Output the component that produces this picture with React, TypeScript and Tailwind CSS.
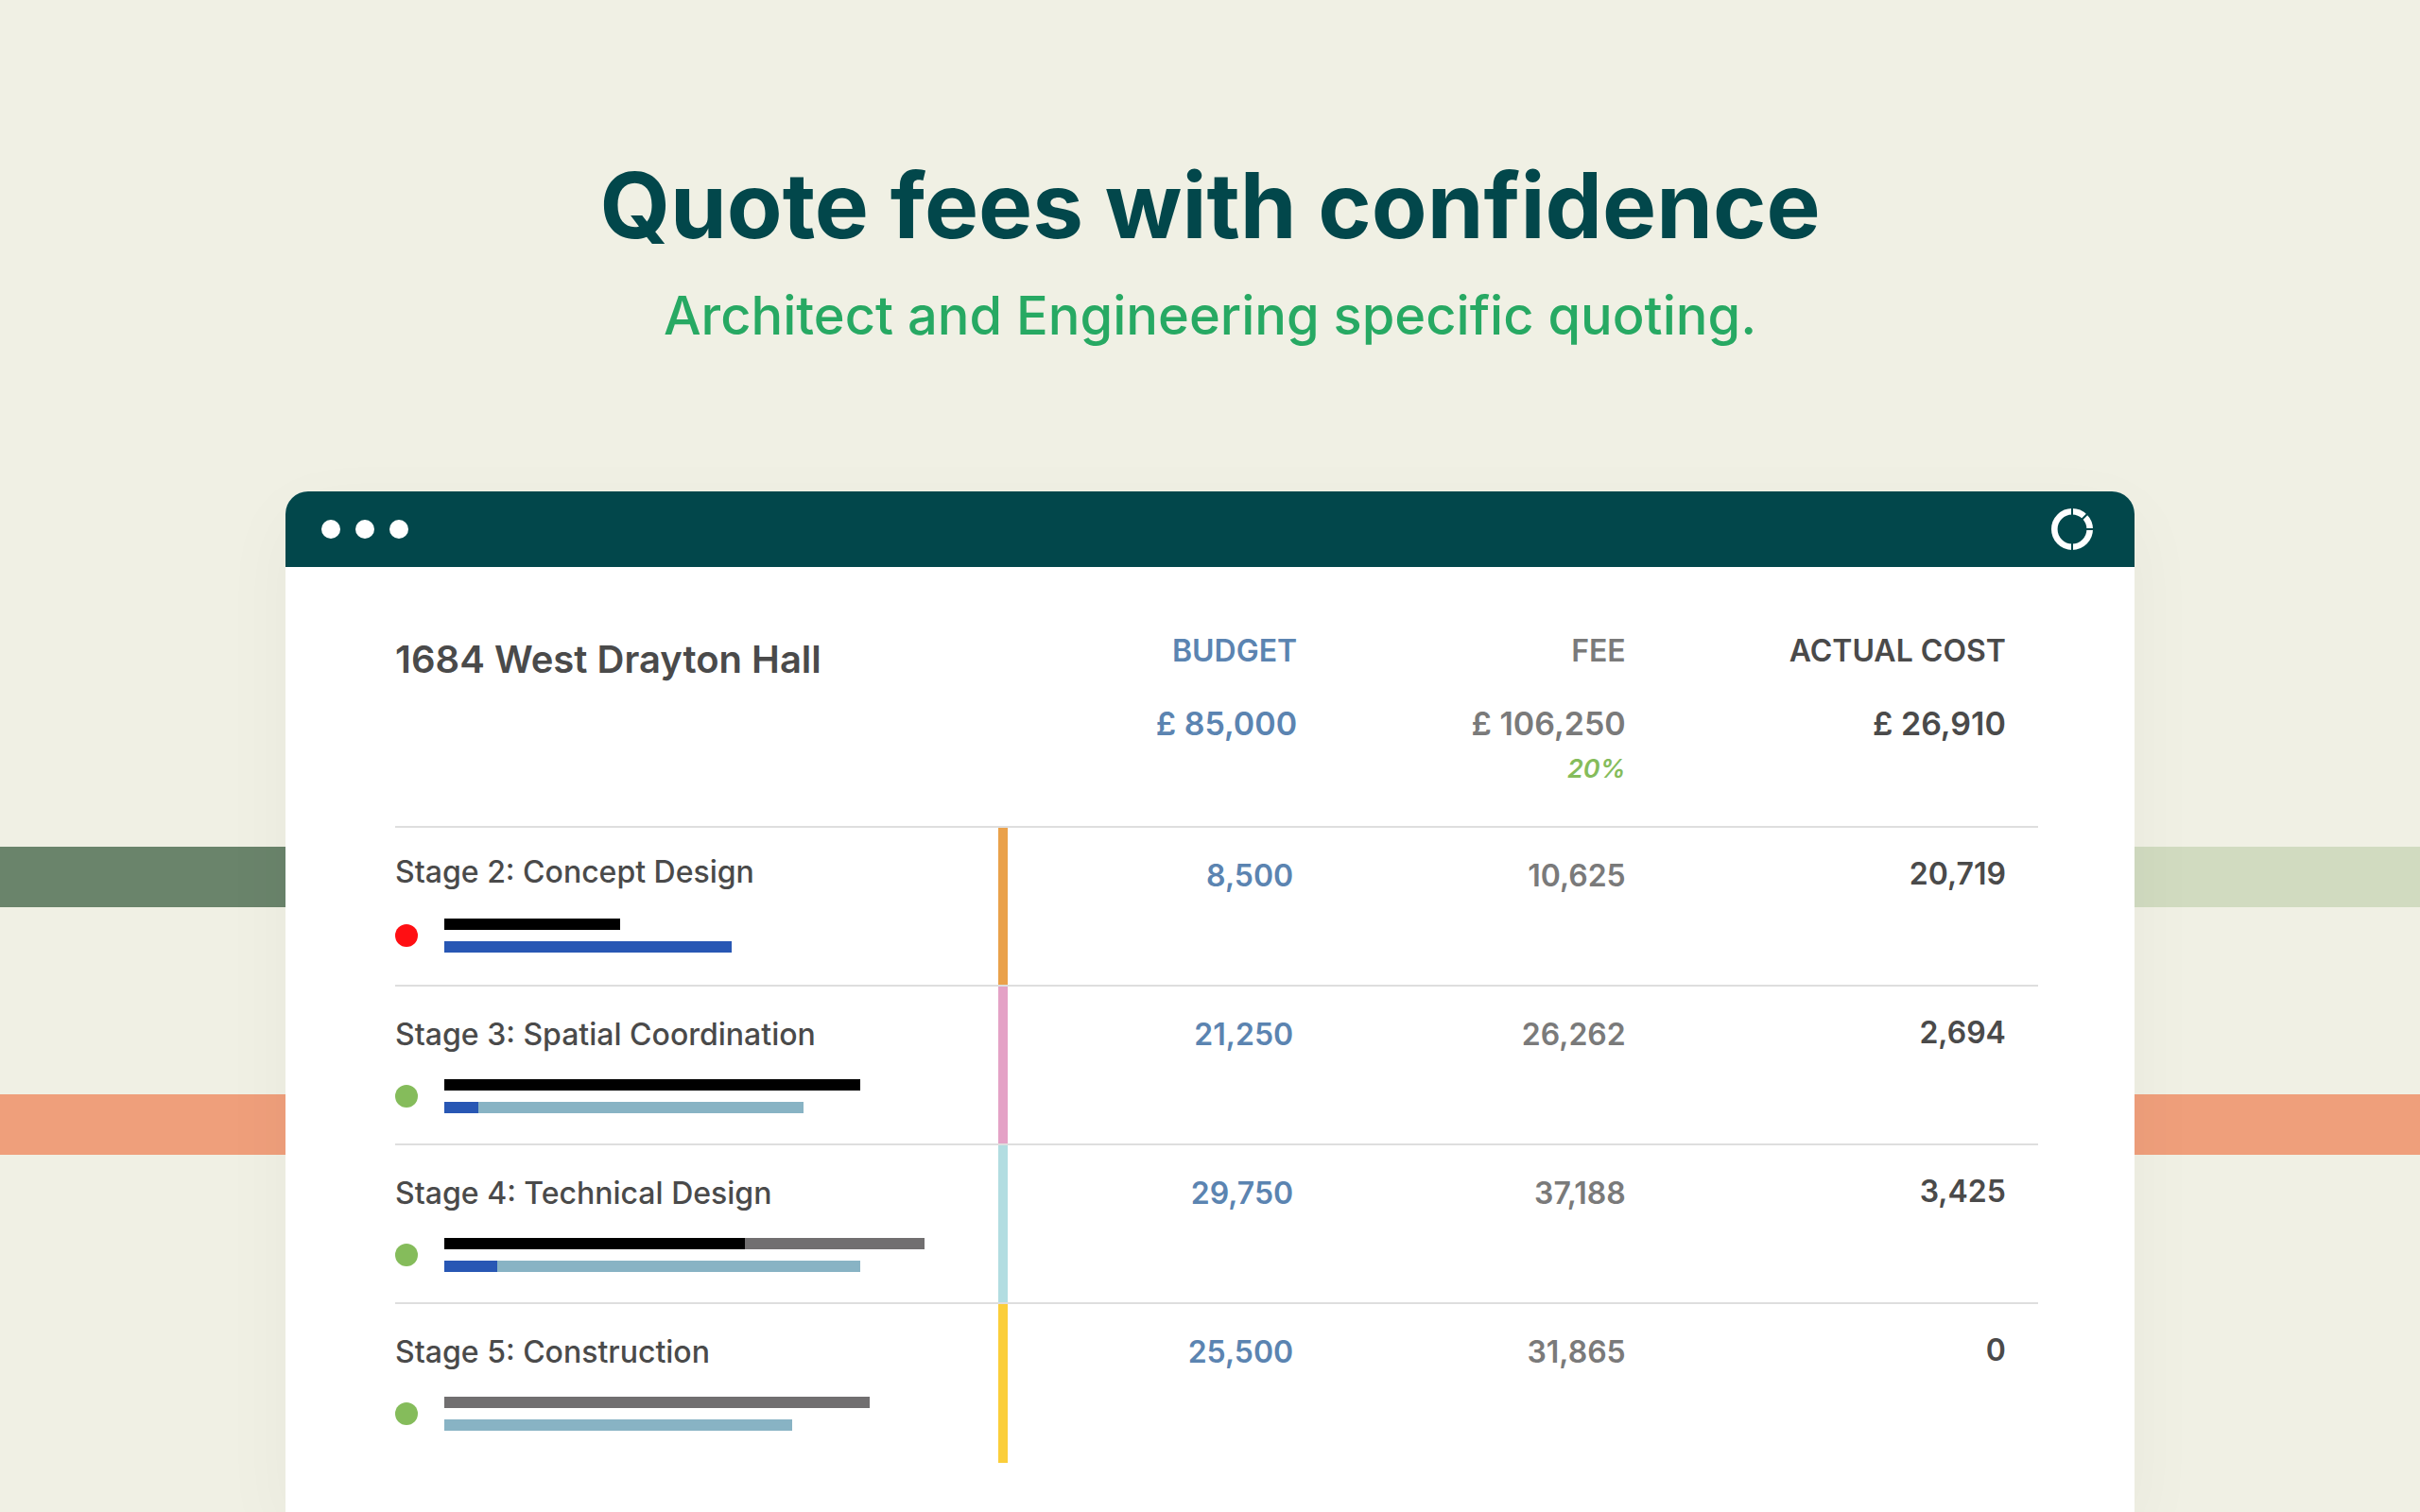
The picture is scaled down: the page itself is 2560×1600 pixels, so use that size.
interface Segment { width: number; color: string; }

interface Stage {
  name: string;
  status: string;
  accent: string;
  fee: Segment[];
  cost: Segment[];
  amounts: [string, string, string];
}

const stages: Stage[] = [
  {
    name: 'Stage 2: Concept Design',
    status: 'bg-[#ff0f13]',
    accent: 'bg-[#eaa14b]',
    fee: [{ width: 186, color: 'bg-black' }],
    cost: [{ width: 304, color: 'bg-[#2857b4]' }],
    amounts: ['8,500', '10,625', '20,719'],
  },
  {
    name: 'Stage 3: Spatial Coordination',
    status: 'bg-[#85bc5b]',
    accent: 'bg-[#e4a2c6]',
    fee: [{ width: 440, color: 'bg-black' }],
    cost: [{ width: 36, color: 'bg-[#2857b4]' }, { width: 344, color: 'bg-[#88b3c4]' }],
    amounts: ['21,250', '26,262', '2,694'],
  },
  {
    name: 'Stage 4: Technical Design',
    status: 'bg-[#85bc5b]',
    accent: 'bg-[#b2dde1]',
    fee: [{ width: 318, color: 'bg-black' }, { width: 190, color: 'bg-[#716f70]' }],
    cost: [{ width: 56, color: 'bg-[#2857b4]' }, { width: 384, color: 'bg-[#88b3c4]' }],
    amounts: ['29,750', '37,188', '3,425'],
  },
  {
    name: 'Stage 5: Construction',
    status: 'bg-[#85bc5b]',
    accent: 'bg-[#fbce3a]',
    fee: [{ width: 450, color: 'bg-[#716f70]' }],
    cost: [{ width: 368, color: 'bg-[#88b3c4]' }],
    amounts: ['25,500', '31,865', '0'],
  },
];

function Bar({ segments }: { segments: Segment[] }) {
  return (
    <div className="flex h-3">
      {segments.map((s) => (
        <div key={s.color} className={s.color} style={{ width: s.width }} />
      ))}
    </div>
  );
}

function Logo() {
  return (
    <svg viewBox="0 0 44 44" className="size-11" aria-hidden="true">
      <circle cx="22" cy="22" r="18.7" fill="none" stroke="#fff" strokeWidth="6.6" />
      <path d="M22 0V8M22 36V44M35 22H44M32 12L39 5" stroke="#02474b" strokeWidth="2" />
    </svg>
  );
}

function Stripes() {
  return (
    <div className="absolute inset-x-0 top-[896px]" aria-hidden="true">
      <div className="flex h-16">
        <div className="flex-1 bg-[#6a846b]" />
        <div className="flex-1 bg-[#d1dbc0]" />
      </div>
      <div className="mt-[198px] h-16 bg-[#ef9f7b]" />
    </div>
  );
}

function QuoteTable() {
  return (
    <table className="w-full table-fixed border-separate border-spacing-0 text-[32px] leading-10">
      <colgroup>
        <col />
        <col className="w-[10px]" />
        <col className="w-[17.6%]" />
        <col className="w-1/5" />
        <col className="w-[25.1%]" />
      </colgroup>
      <thead>
        <tr className="text-right align-top">
          <th colSpan={2} className="pt-[74px] text-left text-[40px] leading-12 font-semibold text-[#4a4a4a]">
            1684 West Drayton Hall
          </th>
          <th className="pt-[69px] font-semibold text-[#5b84b1]">
            <div>BUDGET</div>
            <div className="mt-[37px] text-[34px]/10">£ 85,000</div>
          </th>
          <th className="pt-[69px] pb-10 font-semibold text-[#7a7a7a]">
            <div>FEE</div>
            <div className="mt-[37px] text-[34px]/10">£ 106,250</div>
            <div className="mt-2 text-[27px]/10 text-[#85bc5b] italic">20%</div>
          </th>
          <th className="pt-[69px] pr-[34px] font-semibold text-[#4a4a4a]">
            <div>ACTUAL COST</div>
            <div className="mt-[37px] text-[34px]/10">£ 26,910</div>
          </th>
        </tr>
      </thead>
      <tbody>
        {stages.map((stage) => (
          <tr key={stage.name} className="group h-[168px] text-right align-top font-semibold last:h-[170px]">
            <td className="border-t-2 border-[#dedede] pt-[31px] text-left font-medium text-[#4a4a4a] group-first:pt-[27px]">
              {stage.name}
              <div className="mt-[27px] flex items-center gap-7 group-first:mt-[29px]">
                <span className={`size-6 rounded-full ${stage.status}`} />
                <div className="flex flex-col gap-3">
                  <Bar segments={stage.fee} />
                  <Bar segments={stage.cost} />
                </div>
              </div>
            </td>
            <td className={`border-t-2 border-[#dedede] ${stage.accent}`} />
            <td className="border-t-2 border-[#dedede] pt-[31px] pr-1 text-[#5b84b1]">{stage.amounts[0]}</td>
            <td className="border-t-2 border-[#dedede] pt-[31px] text-[#7a7a7a]">{stage.amounts[1]}</td>
            <td className="border-t-2 border-[#dedede] pt-[29px] pr-[34px] text-[#4a4a4a]">{stage.amounts[2]}</td>
          </tr>
        ))}
      </tbody>
    </table>
  );
}

export default function App() {
  return (
    <div className="relative flex h-screen flex-col items-center overflow-hidden bg-[#f0f0e4] font-['Inter',sans-serif]">
      <Stripes />
      <header className="pt-[157px] text-center">
        <h1 className="text-[96px] leading-[120px] font-bold text-[#02474b]">Quote fees with confidence</h1>
        <p className="mt-[21px] text-[56px] leading-[72px] font-medium text-[#27a963]">
          Architect and Engineering specific quoting.
        </p>
      </header>
      <main className="relative mt-[150px] w-[76.4%] flex-1 rounded-t-3xl bg-white shadow-[0_24px_80px_rgba(0,0,0,0.04)]">
        <div className="flex h-20 items-center justify-between rounded-t-3xl bg-[#02474b] pr-11 pl-[38px]">
          <div className="flex gap-4">
            <span className="size-5 rounded-full bg-white" />
            <span className="size-5 rounded-full bg-white" />
            <span className="size-5 rounded-full bg-white" />
          </div>
          <Logo />
        </div>
        <div className="pr-[102px] pl-[116px]">
          <QuoteTable />
        </div>
      </main>
    </div>
  );
}
